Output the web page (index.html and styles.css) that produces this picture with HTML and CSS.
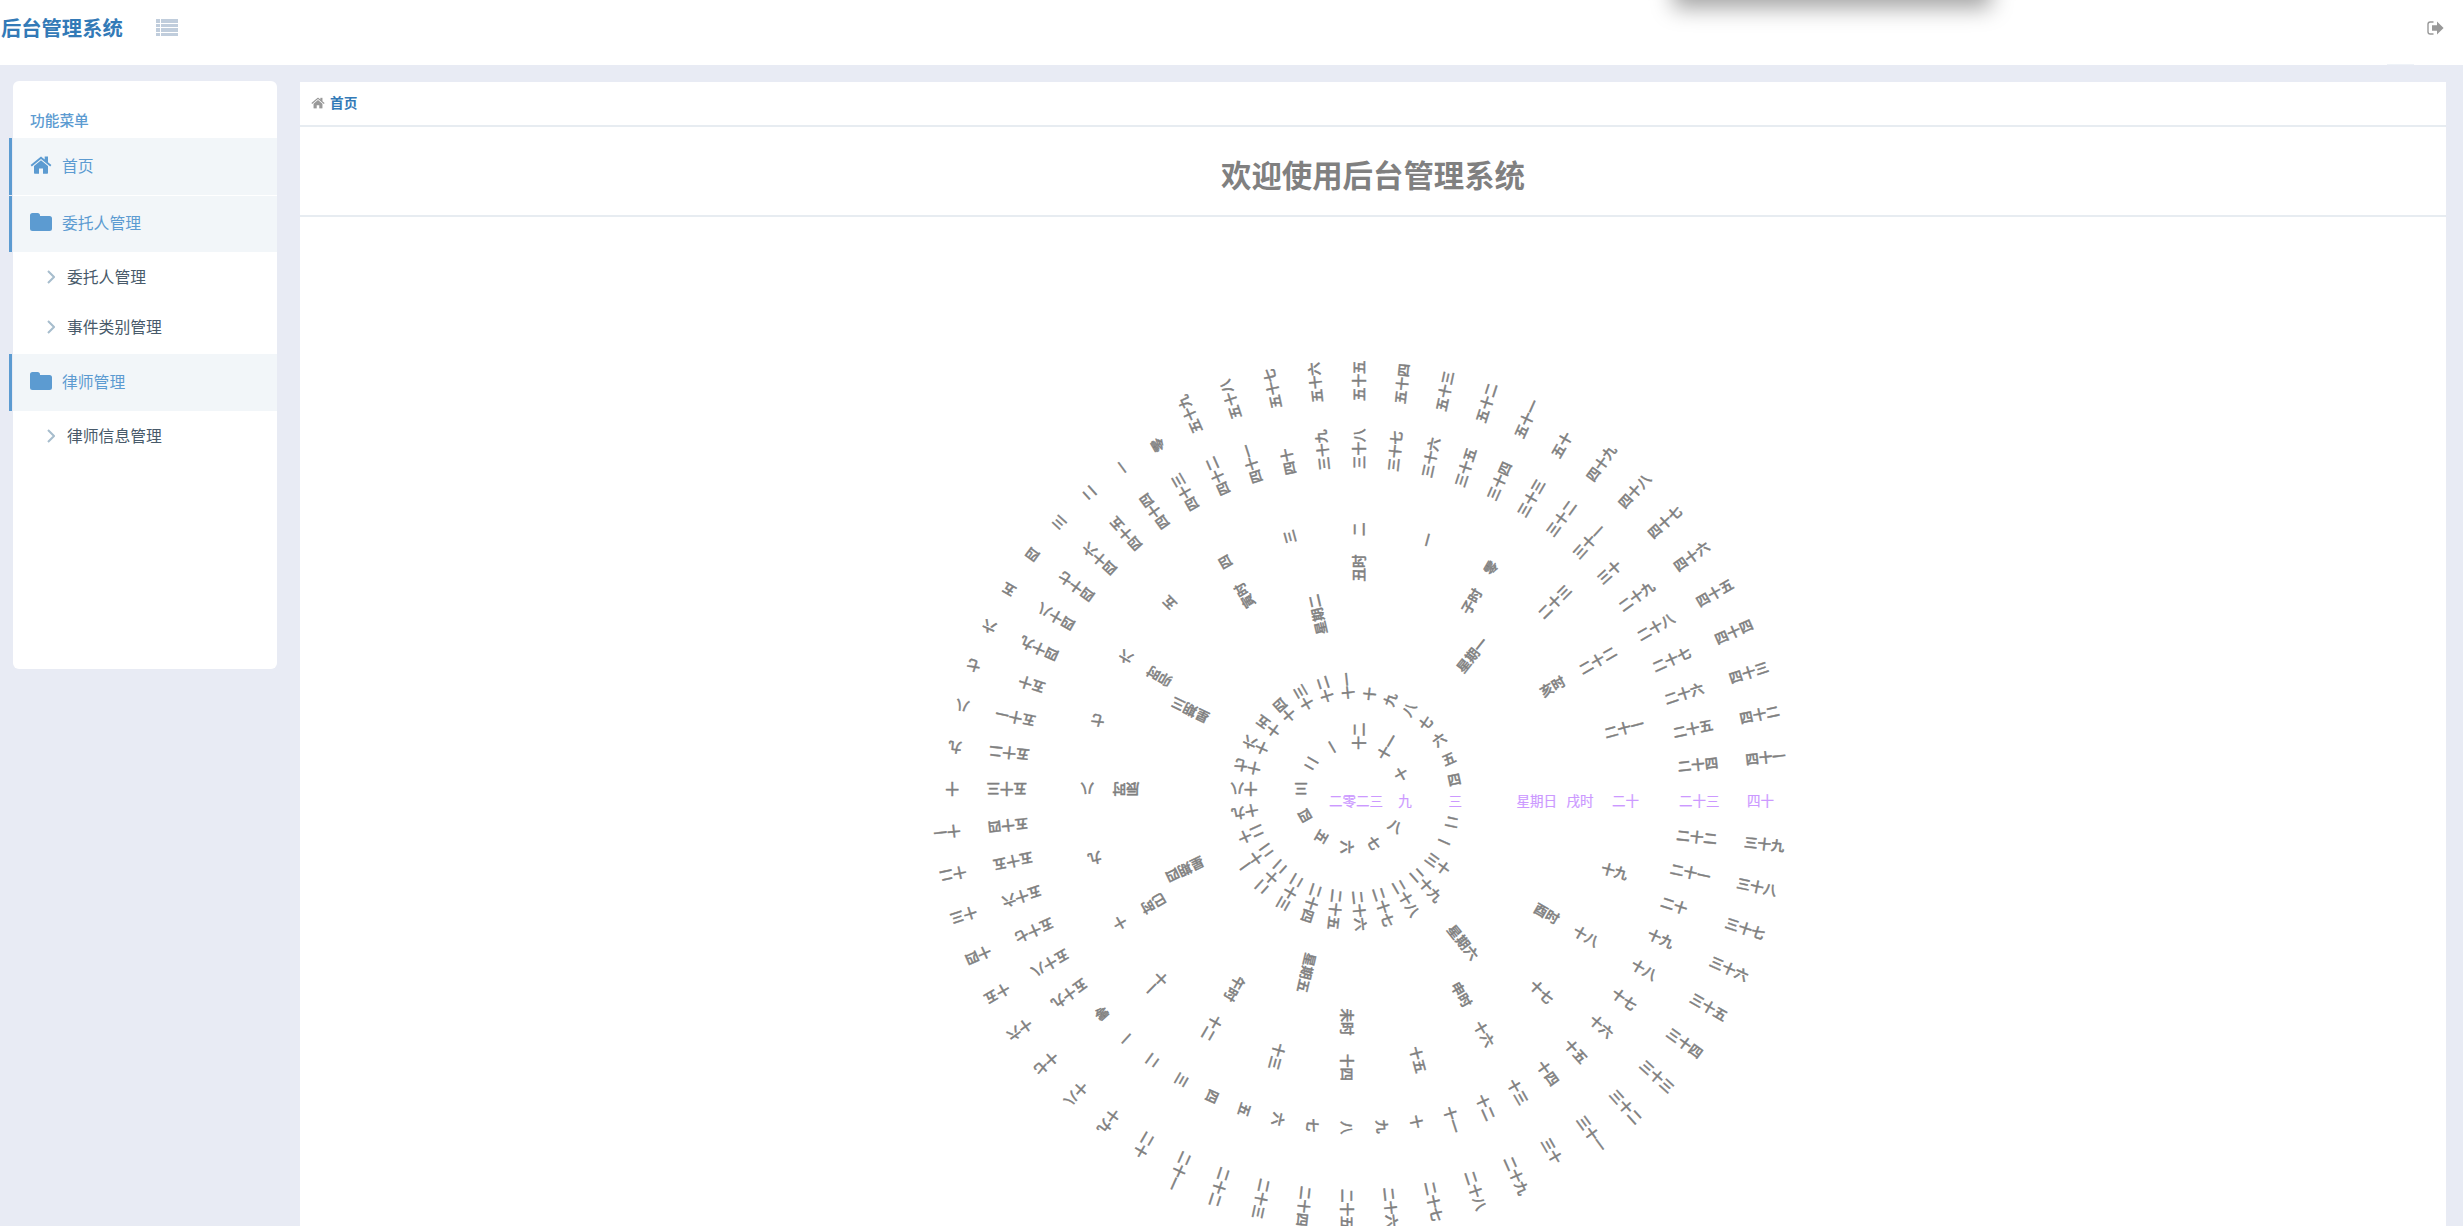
FILE: index.html
```html
<!DOCTYPE html>
<html lang="zh-CN">
<head>
<meta charset="utf-8">
<title>后台管理系统</title>
<link rel="stylesheet" href="styles.css">
</head>
<body>
<header class="topbar">
  <a class="brand">后台管理系统</a>
  <svg class="toggler" viewBox="0 0 22 17" shape-rendering="crispEdges"><path d="M0 0h4v4H0zM5 0h17v4H5zM0 5h4v3H0zM5 5h17v3H5zM0 9h4v4H0zM5 9h17v4H5zM0 14h4v3H0zM5 14h17v3H5z"/></svg>
  <svg class="logout" viewBox="0 0 17 14"><path class="frame" d="M6.5 1H3.2Q1 1 1 3.2v7.6Q1 13 3.2 13h3.3"/><path d="M5 4.3h5V.6L16.6 7 10 13.4V9.7H5z"/></svg>
  <i class="caret-strip"></i>
</header>
<div class="floating-window"></div>
<div class="layout">
  <nav class="sidebar">
    <h3 class="menu-title">功能菜单</h3>
    <a class="item first"><svg class="icon" viewBox="0 0 22 18"><use href="#home"/></svg>首页</a>
    <a class="item second"><svg class="icon" viewBox="0 0 22 18"><use href="#folder"/></svg>委托人管理</a>
    <a class="sub"><svg class="angle" viewBox="0 0 8 14"><path d="M1 1l6 6-6 6"/></svg>委托人管理</a>
    <a class="sub"><svg class="angle" viewBox="0 0 8 14"><path d="M1 1l6 6-6 6"/></svg>事件类别管理</a>
    <a class="item third"><svg class="icon" viewBox="0 0 22 18"><use href="#folder"/></svg>律师管理</a>
    <a class="sub"><svg class="angle" viewBox="0 0 8 14"><path d="M1 1l6 6-6 6"/></svg>律师信息管理</a>
  </nav>
  <main class="content">
    <div class="crumbs"><svg class="crumb-icon" viewBox="0 0 22 18"><use href="#home"/></svg><a>首页</a></div>
    <h1 class="welcome">欢迎使用后台管理系统</h1>
    <section class="clock" id="clock"></section>
  </main>
</div>
<svg class="defs">
  <symbol id="home" viewBox="0 0 22 18"><path d="M11 4.2l7 5.8v7a.8.8 0 0 1-.8.8H13v-5.2H9v5.2H4.800A.8.8 0 0 1 4 17v-7z"/><path d="M11 .4l3.700 3V.6h3.300v5.600l3.400 2.900-1.200 1.300L11 2.900l-9.200 7.500L.6 9.100z"/></symbol>
  <symbol id="folder" viewBox="0 0 22 18"><path d="M0 2.500Q0 0 2.500 0h5Q10 0 10 2.500V3h9.500Q22 3 22 5.500v10Q22 18 19.500 18h-17Q0 18 0 15.500z"/></symbol>
</svg>
<script src="clock.js"></script>
</body>
</html>
```
FILE: styles.css
```css
* { box-sizing: border-box; }
html, body { height: 100%; }
body {
  margin: 0;
  overflow: hidden;
  display: flex;
  flex-direction: column;
  background: #e8ebf4;
  font-family: "Open Sans", "Noto Sans CJK SC", sans-serif;
  font-size: 14px;
  color: #333;
}
.defs { display: none; }
.topbar {
  position: relative;
  flex: none;
  display: flex;
  align-items: flex-start;
  height: 65px;
  padding: 19px 19px 0 1px;
  background: #fff;
}
.brand {
  width: 155px;
  margin-top: -1px;
  font-size: 20.3px;
  font-weight: 700;
  line-height: 20px;
  color: #337ab7;
  white-space: nowrap;
}
.toggler { width: 22px; height: 17px; fill: #c0cddc; }
.logout { width: 17px; height: 14px; margin: 2px 0 0 auto; fill: #999; }
.logout .frame { fill: none; stroke: #999; stroke-width: 1.4; }
.caret-strip {
  position: absolute;
  right: 49px;
  bottom: 0;
  width: 27px;
  height: 1px;
  background: #eff3f8;
}
.floating-window {
  position: absolute;
  left: 1675px;
  top: -60px;
  width: 314px;
  height: 60px;
  box-shadow: 0 6px 22px 2px rgba(0, 0, 0, .36);
}
.layout {
  flex: 1;
  min-height: 0;
  display: flex;
  align-items: flex-start;
  gap: 23px;
  padding: 16px 17px 0 13px;
}
.sidebar {
  flex: none;
  width: 264px;
  height: 588px;
  padding-top: 29px;
  border-radius: 6px;
  background: #fff;
}
.menu-title {
  margin: 0;
  height: 28px;
  padding-left: 17px;
  font-size: 14.700px;
  font-weight: 500;
  line-height: 20px;
  color: #5c9bd1;
}
.item {
  display: flex;
  align-items: center;
  height: 57px;
  margin-left: -4px;
  padding: 0 0 3px 18px;
  border-left: 3px solid #5c9bd1;
  background: linear-gradient(90deg, #e8ebf4 1px, #f2f6f9 1px);
  font-size: 15.800px;
  color: #5c9bd1;
}
.second { height: 56px; margin-top: 1px; }
.third { margin-top: 2px; }
.icon { width: 22px; height: 18px; margin: -1px 10px 0 0; fill: #5c9bd1; }
.sub {
  display: flex;
  align-items: center;
  height: 50px;
  padding: 0 0 2px 34px;
  font-size: 15.800px;
  color: #485a6a;
}
.angle { width: 8px; height: 14px; margin: 2px 12px 0 0; fill: none; stroke: #a7bdcd; stroke-width: 2; }
.content {
  flex: 1;
  align-self: stretch;
  display: flex;
  flex-direction: column;
  margin-top: 1px;
  background: #fff;
}
.crumbs {
  flex: none;
  display: flex;
  align-items: center;
  height: 45px;
  padding: 0 0 4px 11px;
  border-bottom: 2px solid #e7ecf1;
  font-size: 13.700px;
  font-weight: 700;
  color: #337ab7;
}
.crumb-icon { width: 14px; height: 12px; margin: 2px 5px 0 0; fill: #999; }
.welcome {
  flex: none;
  height: 90px;
  margin: 0;
  border-bottom: 2px solid #e7ecf1;
  font-size: 30.400px;
  font-weight: 700;
  line-height: 97px;
  text-align: center;
  color: #808080;
}
.clock {
  position: relative;
  flex: 1;
  min-height: 0;
  overflow: hidden;
  font-family: "Noto Sans CJK SC", sans-serif;
  font-size: 13.500px;
  font-weight: 500;
  line-height: 11.500px;
  color: #808080;
}
.mark {
  position: absolute;
  left: 1053px;
  top: 578px;
  white-space: nowrap;
  transform-origin: 0 0;
  -webkit-text-stroke: .45px currentColor;
}
.current { color: #cc99ff; font-weight: 400; -webkit-text-stroke-width: .2px; }
.year { margin-left: -24px; }
```
FILE: clock.js
```js
const digits = ['零', '一', '二', '三', '四', '五', '六', '七', '八', '九'];
function numeral(n) {
  if (n < 10) return digits[n];
  const tens = Math.floor(n / 10);
  return (tens > 1 ? digits[tens] : '') + '十' + (n % 10 ? digits[n % 10] : '');
}
const range = (from, to) => Array.from({ length: to - from + 1 }, (_, i) => numeral(from + i));

// Each ring: labels, index of the current value, distance from the centre.
const rings = [
  { labels: range(1, 12), current: 8, radius: 45.3 },
  { labels: range(1, 30), current: 2, radius: 95.5 },
  { labels: [...'一二三四五六日'].map(d => '星期' + d), current: 6, radius: 163.5 },
  { labels: [...'子丑寅卯辰巳午未申酉戌亥'].map(h => h + '时'), current: 10, radius: 213.5 },
  { labels: range(0, 23), current: 20, radius: 259 },
  { labels: range(0, 59), current: 23, radius: 326 },
  { labels: range(0, 59), current: 40, radius: 394 }
];

const clock = document.getElementById('clock');
function addMark(text, className, transform) {
  const el = document.createElement('span');
  el.className = 'mark ' + className;
  el.textContent = text;
  if (transform) el.style.transform = transform;
  clock.appendChild(el);
}
addMark('二零二三', 'current year');
for (const ring of rings) {
  ring.labels.forEach((label, i) => {
    const angle = (ring.current - i) * 360 / ring.labels.length;
    addMark(label, i === ring.current ? 'current' : '', `rotate(${angle}deg) translateX(${ring.radius}px)`);
  });
}
```
